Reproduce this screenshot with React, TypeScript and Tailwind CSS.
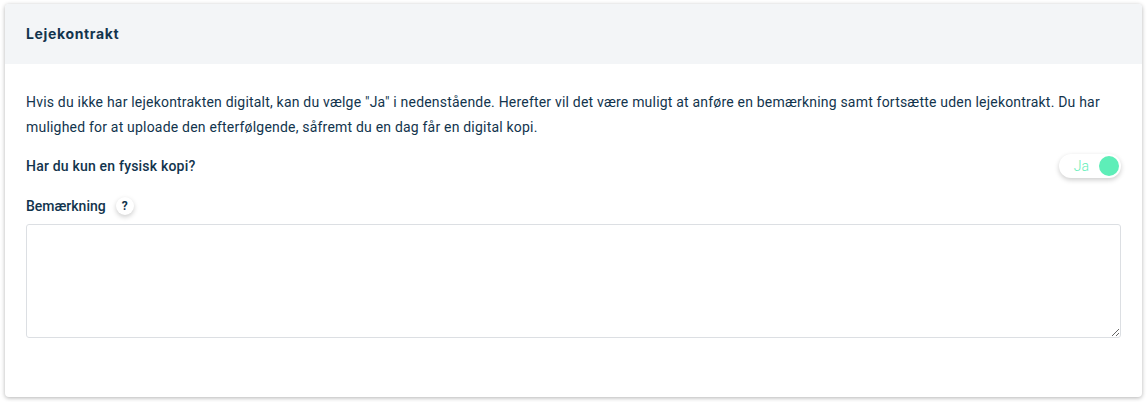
export default function App() {
  return (
    <div className="w-[1147px] h-[402px] bg-white pt-1 pl-[5px] pr-[5px] font-['Roboto',sans-serif] text-[#12344d]">
      <div className="h-[393px] w-[1137px] bg-white rounded shadow-[0_1px_4px_rgba(0,0,0,0.3)] overflow-hidden">
        <div className="h-[60px] bg-[#f3f5f7] px-[21px] pb-[2px] flex items-center">
          <h2 className="text-[14px] font-bold font-['Inter',sans-serif] tracking-[0.65px]">Lejekontrakt</h2>
        </div>
        <div className="px-[21px] pt-[26px]">
          <p className="text-[14px] leading-[25px] tracking-[0.2px] text-[#12344d]">
            Hvis du ikke har lejekontrakten digitalt, kan du vælge "Ja" i nedenstående. Herefter vil det være muligt at anføre en bemærkning samt fortsætte uden lejekontrakt. Du har mulighed for at uploade den efterfølgende, såfremt du en dag får en digital kopi.
          </p>
          <div className="flex items-center justify-between mt-[14px] h-[24px]">
            <span className="text-[14px] font-medium tracking-[0.2px]">Har du kun en fysisk kopi?</span>
            <div className="w-[62px] h-[24px] rounded-full bg-white shadow-[0_2px_5px_rgba(0,0,0,0.2)] flex items-center justify-end gap-[10px] pr-[2px]">
              <span className="text-[14px] font-light text-[#5eeeb8]">Ja</span>
              <span className="w-5 h-5 rounded-full bg-[#5eeeb8]" />
            </div>
          </div>
          <div className="flex items-center gap-[10px] mt-[19px] h-[18px]">
            <span className="text-[14px] font-medium">Bemærkning</span>
            <span className="w-[18px] h-[18px] rounded-full bg-white shadow-[0_2px_5px_rgba(0,0,0,0.2)] flex items-center justify-center text-[12px] font-bold">?</span>
          </div>
          <textarea className="mt-[9px] block w-[1095px] h-[114px] border border-[#dcdfe3] rounded-[3px] bg-white" />
        </div>
      </div>
    </div>
  );
}
